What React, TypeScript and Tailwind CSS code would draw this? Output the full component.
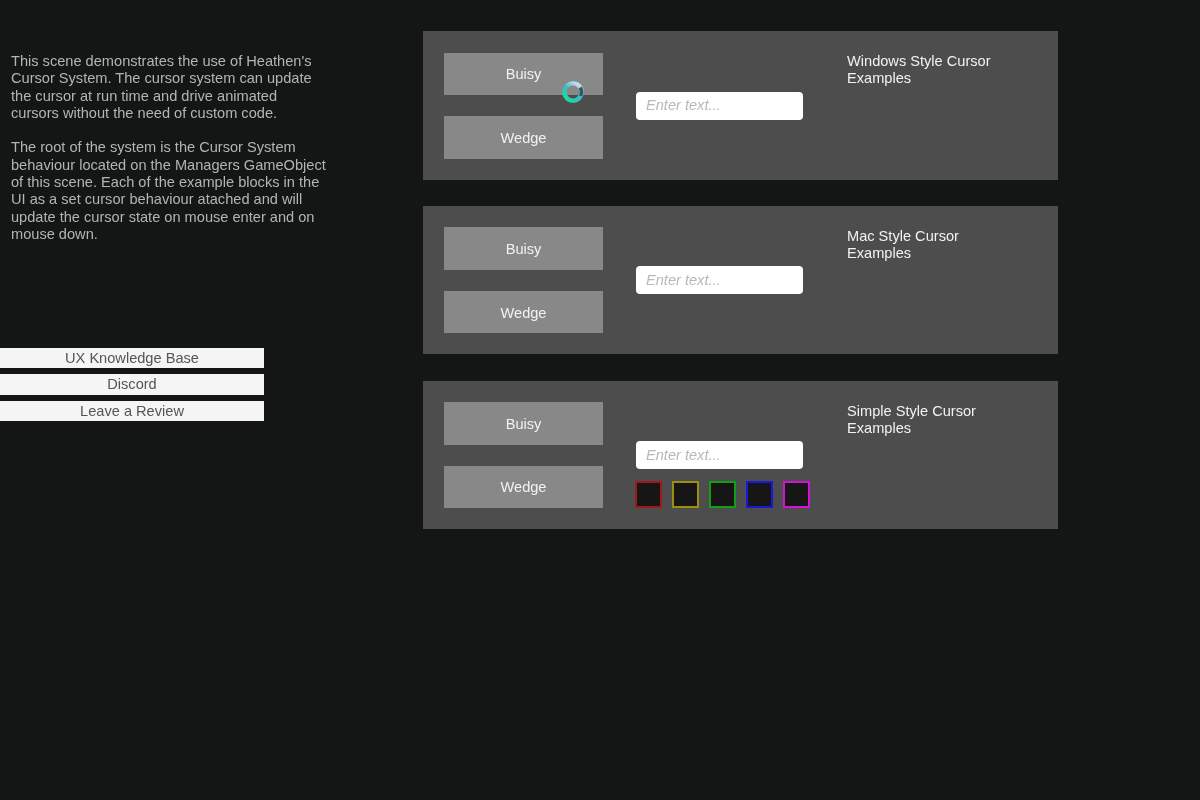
const font = "font-['Liberation_Sans',Arial,sans-serif]";

function Panel({ title, swatches, cursor }: { title: string; swatches?: boolean; cursor?: boolean }) {
  return (
    <div className="relative flex h-[148.6px] w-[635px] bg-[#4d4d4d] pl-[21px] pt-[21.6px]">
      <div className="flex w-[159px] flex-col gap-[20.9px]">
        <div className="flex h-[42.6px] items-center justify-center bg-[#888888] pt-[3px] text-[14.6px] text-[#f2f2f2]">Buisy</div>
        <div className="flex h-[42.6px] items-center justify-center bg-[#888888] pt-[3px] text-[14.6px] text-[#f2f2f2]">Wedge</div>
      </div>
      <div className="ml-[32px] w-[177px] pt-[39px]">
        <div className="ml-px flex h-[28px] w-[167px] items-center rounded-[4px] bg-white pl-[10px] pt-[1px] text-[14.6px] italic text-[#b8b8b8]">Enter text...</div>
        {swatches && (
          <div className="mt-[11.8px] flex gap-[10px]">
            <div className="h-[27px] w-[27px] border-2 border-[#a01818] bg-[#161616]" />
            <div className="h-[27px] w-[27px] border-2 border-[#9c8f10] bg-[#161616]" />
            <div className="h-[27px] w-[27px] border-2 border-[#12a012] bg-[#161616]" />
            <div className="h-[27px] w-[27px] border-2 border-[#1818e0] bg-[#161616]" />
            <div className="h-[27px] w-[27px] border-2 border-[#d214d2] bg-[#161616]" />
          </div>
        )}
      </div>
      <div className="ml-[35px] w-[170px] pt-[0.4px] text-[14.6px] leading-[17.3px] text-[#f2f2f2]">{title}<br />Examples</div>
      {cursor && (
        <svg className="absolute left-[138px] top-[49px]" width="24" height="24" viewBox="0 0 24 24">
          <defs>
            <linearGradient id="ring" x1="0.2" y1="0.9" x2="0.8" y2="0.1">
              <stop offset="0" stopColor="#1fd6a8" />
              <stop offset="0.5" stopColor="#3fb8c0" />
              <stop offset="1" stopColor="#c0dcea" />
            </linearGradient>
          </defs>
          <circle cx="12" cy="12" r="8.6" fill="none" stroke="url(#ring)" strokeWidth="4.4" />
          <path d="M19.2 7.5 A8.6 8.6 0 0 1 19.5 16" fill="none" stroke="#2f5a62" strokeWidth="3.6" />
        </svg>
      )}
    </div>
  );
}

export default function App() {
  return (
    <div className={`${font} flex h-[800px] w-[1200px] overflow-hidden bg-[#141616] blur-[0.5px]`}>
      <div className="w-[423px] shrink-0 pt-[53px]">
        <div className="w-[330px] pl-[11px] text-[14.6px] leading-[17.3px] text-[#b4b4b4]">
          <p>This scene demonstrates the use of Heathen's<br />Cursor System. The cursor system can update<br />the cursor at run time and drive animated<br />cursors without the need of custom code.</p>
          <p className="mt-[17.3px]">The root of the system is the Cursor System<br />behaviour located on the Managers GameObject<br />of this scene. Each of the example blocks in the<br />UI as a set cursor behaviour atached and will<br />update the cursor state on mouse enter and on<br />mouse down.</p>
        </div>
        <div className="mt-[104.4px] flex w-[264px] flex-col gap-[6px] text-[14.6px] text-[#555555]">
          <div className="flex h-[20.5px] items-center justify-center bg-[#f5f5f5] pt-[2px]">UX Knowledge Base</div>
          <div className="flex h-[20.5px] items-center justify-center bg-[#f5f5f5] pt-[2px]">Discord</div>
          <div className="flex h-[20.5px] items-center justify-center bg-[#f5f5f5] pt-[2px]">Leave a Review</div>
        </div>
      </div>
      <div className="flex flex-col gap-[26.2px] pt-[31px]">
        <Panel title="Windows Style Cursor" cursor />
        <Panel title="Mac Style Cursor" />
        <Panel title="Simple Style Cursor" swatches />
      </div>
    </div>
  );
}
